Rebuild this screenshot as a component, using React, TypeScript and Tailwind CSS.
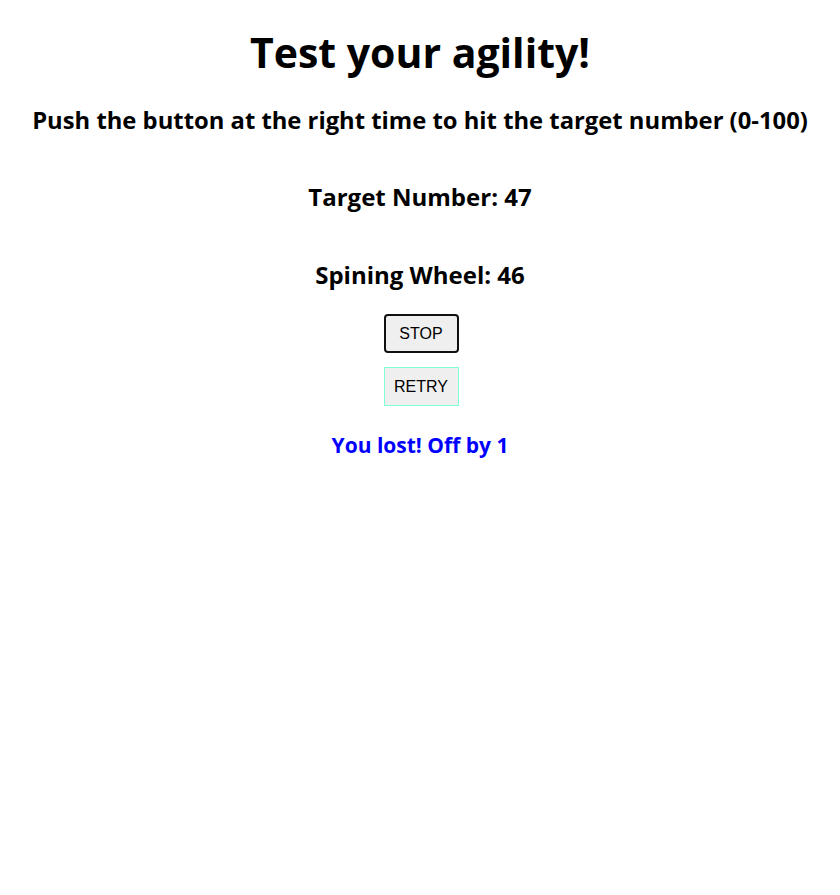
const font = { fontFamily: '"Open Sans", "Noto Sans", sans-serif' };

const App = () => {
  const target = 47;
  const wheel = 46;

  return (
    <div className="flex flex-col items-center bg-white text-black" style={font}>
      <h1 className="mt-[26px] text-[41px] leading-[52px] font-bold">Test your agility!</h1>
      <h2 className="mt-[27px] text-[23.8px] leading-[30px] font-bold">
        Push the button at the right time to hit the target number (0-100)
      </h2>
      <h2 className="mt-[47px] text-[24px] leading-[30px] font-bold">Target Number: {target}</h2>
      <h2 className="mt-[48px] text-[24px] leading-[30px] font-bold">Spining Wheel: {wheel}</h2>
      <button className="mt-[24px] ml-[2px] h-[39px] w-[75px] rounded-[4px] border-2 border-[#101010] bg-[#efefef] font-['Liberation_Sans',Arial,sans-serif] text-[16px]">
        STOP
      </button>
      <button className="mt-[14px] ml-[2px] h-[39px] w-[75px] border border-[#7fffd4] bg-[#efefef] font-['Liberation_Sans',Arial,sans-serif] text-[16px]">
        RETRY
      </button>
      <h3 className="mt-[25px] text-[21px] leading-[28px] font-bold text-[#0000ff]">
        You lost! Off by {Math.abs(target - wheel)}
      </h3>
    </div>
  );
};

export default App;
